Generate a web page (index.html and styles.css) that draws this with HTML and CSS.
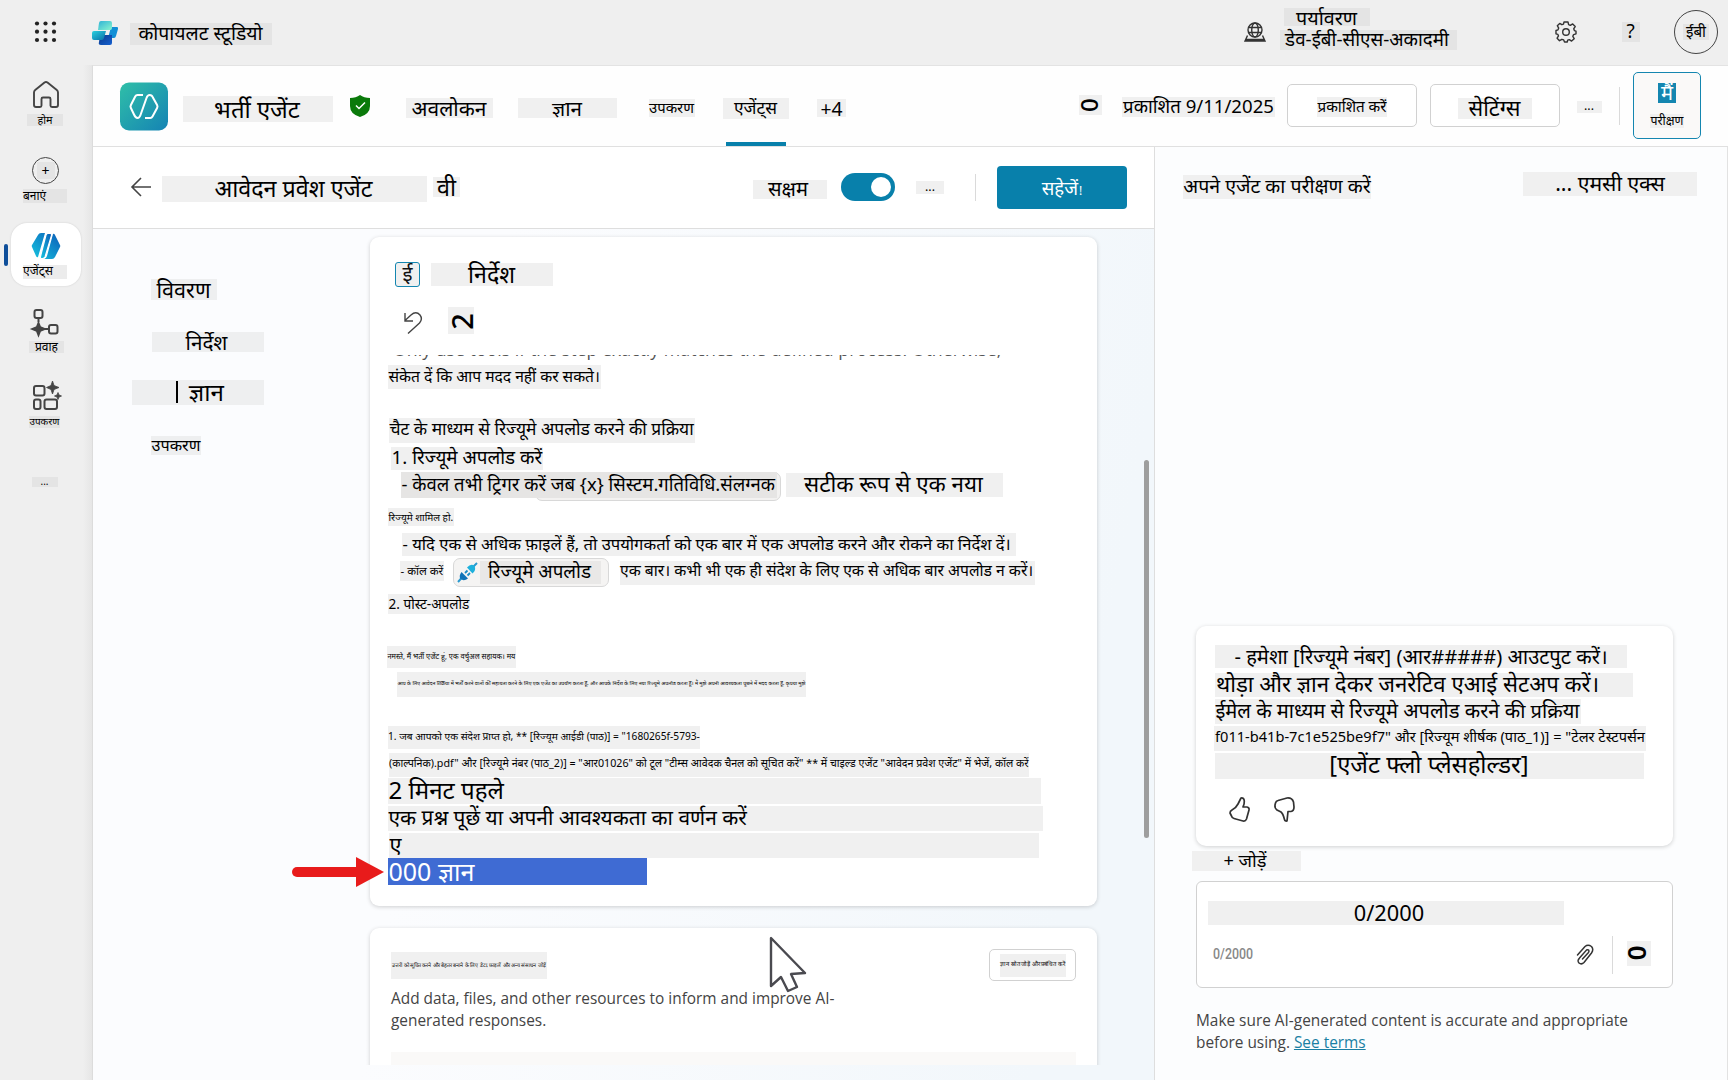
FILE: index.html
```html
<!DOCTYPE html>
<html lang="hi">
<head>
<meta charset="utf-8">
<title>कोपायलट स्टूडियो</title>
<link rel="stylesheet" href="styles.css">
</head>
<body>
<header class="topbar">
  <svg class="waffle" viewBox="0 0 22 22"><g fill="#222"><circle cx="2" cy="2.500" r="2.100"/><circle cx="10.500" cy="2.500" r="2.100"/><circle cx="19" cy="2.500" r="2.100"/><circle cx="2" cy="10.700" r="2.100"/><circle cx="10.500" cy="10.700" r="2.100"/><circle cx="19" cy="10.700" r="2.100"/><circle cx="2" cy="19" r="2.100"/><circle cx="10.500" cy="19" r="2.100"/><circle cx="19" cy="19" r="2.100"/></g></svg>
  <svg class="brand-mark" viewBox="0 0 26 24"><defs><linearGradient id="bm1" x1="0" y1="0" x2="1" y2="1"><stop offset="0" stop-color="#2fb3d6"/><stop offset="1" stop-color="#8af5cf"/></linearGradient><linearGradient id="bm2" x1="0" y1="0" x2="1" y2="1"><stop offset="0" stop-color="#2bd0dd"/><stop offset="1" stop-color="#0a6ea8"/></linearGradient><linearGradient id="bm3" x1="0" y1="0" x2="1" y2="1"><stop offset="0" stop-color="#0a3a8c"/><stop offset="1" stop-color="#1560d0"/></linearGradient></defs><path d="M19 6h6q1.500 0 1 2l-2 7q-.5 2-2 2h-6z" fill="#128fd6"/><path d="M8 14h12v8q0 2-2 2H9q-3 0-2-3z" fill="url(#bm3)"/><path d="M2 10h12l-2 7q-.5 2-2 2H2q-2 0-2-2v-5q0-2 2-2z" fill="url(#bm2)"/><path d="M9 0h9q2 0 2 2v5q0 2-2 2H6l1-7q.3-2 2-2z" fill="url(#bm1)"/></svg>
  <span class="tag brand-name">कोपायलट स्टूडियो</span>
  <svg class="globe" viewBox="0 0 22 20" fill="none" stroke="#333" stroke-width="1.400"><circle cx="11" cy="8" r="7"/><ellipse cx="11" cy="8" rx="3.300" ry="7"/><path d="M4.500 5.500h13M4.500 10.500h13M3.500 13.500 1 19h20l-2.500-5.500M1.500 17.500h19"/></svg>
  <div class="env">
    <span class="tag env-label">पर्यावरण</span>
    <span class="tag env-name">डेव-ईबी-सीएस-अकादमी</span>
  </div>
  <svg class="gear" viewBox="0 0 22 22" fill="none" stroke="#333" stroke-width="1.400" stroke-linejoin="round"><path d="M9 1h4l.6 2.700 1.700.7 2.400-1.500 2.500 2.600-1.500 2.300.7 1.800L21 10.200v2.600l-2.400.8-.8 1.700 1.400 2.400-2.600 2.400-2.300-1.500-1.600.6L12.200 21H9.500l-.8-2.100-1.800-.6-2.400 1.400-2.400-2.500 1.400-2.300-.6-1.500L1 12.800V9.500l2-.7.700-1.700-1.400-2.400 2.400-2.300 2.200 1.300 1.600-.6z"/><circle cx="11" cy="11" r="3.300"/></svg>
  <span class="tag help">?</span>
  <div class="avatar"><span class="tag">ईबी</span></div>
</header>
<div class="shell">
  <nav class="rail">
    <div class="rail-item home">
      <svg width="26" height="27" viewBox="0 0 26 27" fill="none" stroke="#444" stroke-width="1.900" stroke-linejoin="round"><path d="M1 11.500Q1 10 2.200 9L11.500 1.500q1.500-1 3 0L23.800 9Q25 10 25 11.500V24q0 2-2 2h-4q-1.500 0-1.500-1.500V18q0-1.500-1.500-1.500h-6Q8.500 16.500 8.500 18v6.500Q8.500 26 7 26H3q-2 0-2-2z"/></svg>
      <span class="tag">होम</span>
    </div>
    <div class="rail-item create">
      <div class="ring"><span class="tag">+</span></div>
      <span class="tag">बनाएं</span>
    </div>
    <div class="rail-item agents">
      <svg width="28" height="26" viewBox="0 0 28 26"><defs><linearGradient id="ag" x1="0" y1="1" x2="1" y2="0"><stop offset="0" stop-color="#16c6e0"/><stop offset="1" stop-color="#0b5cb8"/></linearGradient></defs><path d="M9 0h4L6 24q-1 1-2-1L0 14q-.5-1 0-2L6 2Q7 0 9 0zM15 26h5q2 0 3-2l5-10q.5-1 0-2L23 2q-1-2-2-1l-6 22q-1 3-3 3z" fill="url(#ag)"/><path d="M15.500.5h3q1.500.5 1 2L13 24q-.6 1.500-2.500 1.500H9Q8 25 8.500 23.500L14 2q.5-1.200 1.500-1.500z" fill="url(#ag)" stroke="#fff" stroke-width="1.200"/></svg>
      <span class="tag">एजेंट्स</span>
    </div>
    <div class="rail-item flows">
      <svg width="26" height="26" viewBox="0 0 26 26" fill="none" stroke="#444" stroke-width="2"><rect x="1.500" y="1" width="8" height="8" rx="2"/><path d="M5.500 9v4M12 20h4"/><rect x="16" y="16" width="8.500" height="8.500" rx="2"/><path d="M5.500 14 7.200 18.300 11.500 20 7.200 21.700 5.500 26 3.800 21.700-.5 20 3.800 18.300z" fill="#444"/></svg>
      <span class="tag">प्रवाह</span>
    </div>
    <div class="rail-item tools">
      <svg width="30" height="29" viewBox="0 0 30 29" fill="none" stroke="#444" stroke-width="2"><rect x="2" y="5" width="10.500" height="9.500" rx="2"/><rect x="2" y="18.500" width="6.500" height="9.500" rx="2"/><rect x="12.500" y="18.500" width="12.500" height="9.500" rx="2"/><path d="M20.500 0 22 4.500 27 6.500 22 8.500 20.500 13 19 8.500 14.500 6.500 19 4.500zM26 11.500 27 14 29.500 15 27 16 26 18.500 25 16 22.500 15 25 14z" fill="#444" stroke-width=".8"/></svg>
      <span class="tag">उपकरण</span>
    </div>
    <span class="tag rail-more">...</span>
  </nav>
  <main class="page">
    <div class="agent-bar">
      <svg class="agent-logo" viewBox="0 0 48 48"><defs><linearGradient id="al" x1="0" y1="0" x2="1" y2="1"><stop offset="0" stop-color="#2fbfa8"/><stop offset="1" stop-color="#1583b4"/></linearGradient></defs><rect width="48" height="48" rx="9" fill="url(#al)"/><path d="M23 12.500h-5.500q-1.500 0-2.300 1.500l-4.300 8.500q-.8 1.500 0 3L14 32q1.500 3.500 3.500 3.500t3-3l6-17q1-3 3.200-3t3.200 2.500l4.200 7.500q.8 1.500 0 3L32.500 34q-.8 1.500-2.300 1.500H25" fill="none" stroke="#fff" stroke-width="2"/></svg>
      <span class="tag agent-name">भर्ती एजेंट</span>
      <svg class="shield" viewBox="0 0 20 22"><path d="M10 0q4 3 10 3v8q0 8-10 11Q0 19 0 11V3q6 0 10-3z" fill="#0b7a0b"/><path d="m6 10.500 3 3 6-6" fill="none" stroke="#fff" stroke-width="1.500"/></svg>
      <span class="tag tab-overview">अवलोकन</span>
      <span class="tag tab-knowledge">ज्ञान</span>
      <span class="tag tab-tools">उपकरण</span>
      <div class="tab-active"><span class="tag">एजेंट्स</span></div>
      <span class="tag tab-more">+4</span>
      <span class="tag status-icon"><b class="turned">0</b></span>
      <span class="tag published">प्रकाशित 9/11/2025</span>
      <button class="btn publish"><span class="tag">प्रकाशित करें</span></button>
      <button class="btn settings"><span class="tag">सेटिंग्स</span></button>
      <span class="tag bar-more">...</span>
      <i class="rule"></i>
      <button class="test-btn"><span class="test-glyph">मैं</span><span class="tag">परीक्षण</span></button>
    </div>
    <div class="columns">
      <section class="editor">
        <div class="sub-bar">
          <svg class="back" viewBox="0 0 20 18" fill="none" stroke="#444" stroke-width="1.600"><path d="M20 9H1M10 0 1 9l9 9"/></svg>
          <span class="tag sub-title">आवेदन प्रवेश एजेंट</span>
          <span class="tag sub-v">वी</span>
          <span class="tag enabled">सक्षम</span>
          <span class="toggle"><i></i></span>
          <span class="tag sub-more">...</span>
          <i class="rule"></i>
          <button class="save"><span>सहेजें</span><small>!</small></button>
        </div>
        <div class="canvas">
          <nav class="sections">
            <span class="tag sec-details">विवरण</span>
            <span class="tag sec-instructions">निर्देश</span>
            <span class="tag sec-knowledge"><b class="caret"></b><span>ज्ञान</span></span>
            <span class="tag sec-tools">उपकरण</span>
          </nav>
          <div class="cards">
            <article class="card instructions">
              <div class="card-head"><span class="head-icon">ई</span><span class="tag head-title">निर्देश</span></div>
              <div class="tools-row">
                <svg class="undo" viewBox="0 0 18 22" fill="none" stroke="#444" stroke-width="1.400"><path d="M1 1v8h8M1 8.500 7 3q5-4.500 9 0 3 4-.5 8L4 21.500"/></svg>
                <span class="tag redo"><b class="turned">2</b></span>
              </div>
              <div class="cutoff"><span>Only use tools if the step exactly matches the defined process. Otherwise,</span></div>
              <span class="tag l1">संकेत दें कि आप मदद नहीं कर सकते।</span>
              <span class="tag l2">चैट के माध्यम से रिज्यूमे अपलोड करने की प्रक्रिया</span>
              <span class="tag l3">1. रिज्यूमे अपलोड करें</span>
              <div class="line l4"><i class="chip-back"></i><span class="tag l4a">- केवल तभी ट्रिगर करें जब {x} सिस्टम.गतिविधि.संलग्नक</span><span class="tag l4b">सटीक रूप से एक नया</span></div>
              <span class="tag l5">रिज्यूमे शामिल हो.</span>
              <span class="tag l6">- यदि एक से अधिक फ़ाइलें हैं, तो उपयोगकर्ता को एक बार में एक अपलोड करने और रोकने का निर्देश दें।</span>
              <div class="line l7"><span class="tag l7a">- कॉल करें</span><span class="chip"><svg width="19" height="19" viewBox="0 0 19 19"><path d="M0 19 4 14.500M15 4 19 0" stroke="#2a9ad0" stroke-width="2"/><path d="M3.500 9 10 15.500q-4 3-7.500.500-2-3 1-7z" fill="#1173b8"/><path d="M9 4.500q4-4.500 7.500-1.500 2 4-2 7.500z" fill="#1eb0dc"/><path d="m7 10 2.500-2.500M9.500 12.500 12 10" stroke="#1b8cc8" stroke-width="1.800"/></svg><span class="tag l7b">रिज्यूमे अपलोड</span></span><span class="tag l7c">एक बार। कभी भी एक ही संदेश के लिए एक से अधिक बार अपलोड न करें।</span></div>
              <span class="tag l8">2. पोस्ट-अपलोड</span>
              <span class="tag l9">नमस्ते, मैं भर्ती एजेंट हूं, एक वर्चुअल सहायक। मय</span>
              <span class="tag l10">आप के लिए आवेदन प्रक्रिया में भर्ती करने वालों की सहायता करने के लिए एक एजेंट का उपयोग करता हूं, और आपके निर्देश के लिए नया रिज्यूमे अपलोड करता हूं। मैं मुझे अपनी आवश्यकता पूछने में मदद करता हूं, कृपया मुझे</span>
              <span class="tag l11">1. जब आपको एक संदेश प्राप्त हो, ** [रिज्यूम आईडी (पाठ)] = "1680265f-5793-</span>
              <span class="tag l12">(काल्पनिक).pdf" और [रिज्यूमे नंबर (पाठ_2)] = "आर01026" को टूल "टीम्स आवेदक चैनल को सूचित करें" ** में चाइल्ड एजेंट "आवेदन प्रवेश एजेंट" में भेजें, कॉल करें</span>
              <span class="tag l13">2 मिनट पहले</span>
              <span class="tag l14">एक प्रश्न पूछें या अपनी आवश्यकता का वर्णन करें</span>
              <span class="tag l15">ए</span>
              <span class="tag l16">000 ज्ञान</span>
            </article>
            <article class="card knowledge">
              <div class="k-head"><span class="tag k-title">उत्तरों को सूचित करने और बेहतर बनाने के लिए डेटा, फ़ाइलें और अन्य संसाधन जोड़ें</span><button class="btn k-add"><span class="tag">ज्ञान स्रोत जोड़ें और प्रबंधित करें</span></button></div>
              <p>Add data, files, and other resources to inform and improve AI-<br>generated responses.</p>
              <div class="k-strip"></div>
            </article>
          </div>
          <i class="scrollbar"></i>
          <svg class="arrow" viewBox="0 0 92 30"><path d="M5 15h62" stroke="#e81b1b" stroke-width="10" stroke-linecap="round"/><path d="M64 0 92 15 64 30z" fill="#e81b1b"/></svg>
          <svg class="cursor" viewBox="0 0 38 56"><path d="M2 2v48l10-9 7 14 9-4-6-13 14-1z" fill="#fff" stroke="#4a4a50" stroke-width="2.400" stroke-linejoin="round"/></svg>
        </div>
      </section>
      <aside class="tester">
        <div class="tester-head"><span class="tag t-title">अपने एजेंट का परीक्षण करें</span><span class="tag t-tools">... एमसी एक्स</span></div>
        <div class="reply">
          <span class="tag r1">- हमेशा [रिज्यूमे नंबर] (आर#####) आउटपुट करें।</span>
          <span class="tag r2">थोड़ा और ज्ञान देकर जनरेटिव एआई सेटअप करें।</span>
          <span class="tag r3">ईमेल के माध्यम से रिज्यूमे अपलोड करने की प्रक्रिया</span>
          <span class="tag r4">f011-b41b-7c1e525be9f7" और [रिज्यूम शीर्षक (पाठ_1)] = "टेलर टेस्टपर्सन</span>
          <span class="tag r5">[एजेंट फ्लो प्लेसहोल्डर]</span>
          <div class="votes">
            <svg width="21" height="25" viewBox="0 0 21 25" fill="none" stroke="#333" stroke-width="1.700" stroke-linejoin="round"><path d="M12 1q3-.5 3.300 3 .2 3-1.300 6h4q2.500.5 2 3l-2.500 9q-1 2.500-3.500 2l-9-2.500Q3 21 2.500 19L1 16q0-2 2-3 4-2 6-6z"/></svg>
            <svg width="21" height="25" viewBox="0 0 21 25" fill="none" stroke="#333" stroke-width="1.700" stroke-linejoin="round"><path d="M13 24q-2 .5-2.500-1.500Q9 16.500 7 15l-4-2Q.5 11 1 8l.5-2Q2 4 4 3.500L13 1q5-.5 6.500 4l.5 5q0 4-3 4.500h-3z"/></svg>
          </div>
        </div>
        <span class="tag add">+ जोड़ें</span>
        <div class="composer">
          <span class="tag c-text">0/2000</span>
          <div class="c-row"><span class="count">0/2000</span>
            <svg class="clip" viewBox="0 0 18 21" fill="none" stroke="#333" stroke-width="1.500" stroke-linecap="round"><path d="M1.500 11 9 2.500q3-2.500 6.500 0 2.500 3 0 6.500L8 18.500q-2.500 2.500-5 .5-2-2.500.5-5l7-8q1.500-.8 2.300.300.500 1.200-.3 2.200L6.500 15"/></svg>
            <i class="rule"></i><span class="tag send"><b class="turned">0</b></span></div>
        </div>
        <p class="notice">Make sure AI-generated content is accurate and appropriate<br>before using. <a>See terms</a></p>
      </aside>
    </div>
  </main>
</div>
</body>
</html>
```
FILE: styles.css
```css
* { box-sizing: border-box; }
body { margin: 0; width: 1728px; height: 1080px; overflow: hidden; background: #efefef; font-family: "Noto Sans", "Noto Sans Devanagari", sans-serif; font-size: 14px; color: #111; line-height: 1.36; }
svg { display: block; flex: none; overflow: visible; }
button { padding: 0; font: inherit; }
.tag { display: flex; flex: none; align-items: center; justify-content: center; padding: 0 1px 1px 0; white-space: nowrap; background: #f0f0f0; color: #000; line-height: 1; }
.rule { flex: none; width: 1px; background: #dadada; }
.turned { display: block; font-weight: 500; transform: rotate(90deg); }
.btn { display: flex; flex: none; align-items: center; justify-content: center; border: 1px solid #d1d1d1; border-radius: 5px; background: #fff; }

.topbar { display: flex; height: 65px; background: #efefef; }
.topbar .tag { background: #e4e4e4; }
.waffle { width: 22px; height: 22px; margin: 21px 0 0 35px; }
.brand-mark { width: 26px; height: 24px; margin: 21px 0 0 35px; }
.brand-name { width: 142px; height: 22px; margin: 23px 0 0 12px; padding-bottom: 2px; font-size: 19.4px; }
.globe { width: 22px; height: 20px; margin: 22px 0 0 972px; }
.env { width: 178px; margin: 8px 0 0 14px; }
.env .env-label { width: 86px; height: 18px; margin-left: 4px; padding: 1px 1px 0 0; font-size: 19.7px; }
.env .env-name { width: 177px; height: 20px; margin-top: 4px; padding-right: 3px; font-size: 18.8px; }
.gear { width: 22px; height: 22px; margin: 21px 0 0 97px; }
.help { width: 18px; height: 20px; margin: 22px 0 0 45px; font-size: 19px; }
.avatar { display: flex; flex: none; align-items: center; justify-content: center; width: 44px; height: 44px; margin: 10px 0 0 34px; border: 1.5px solid #444; border-radius: 50%; }
.avatar .tag { width: 26px; height: 16px; padding: 0; font-size: 15.1px; }

.shell { display: flex; height: 1015px; }
.rail { flex: none; width: 92px; background: linear-gradient(90deg, #efefef 83px, #e6e6e6); }
.rail .tag { background: #e4e4e4; padding-bottom: 0; }
.rail-item { display: flex; flex-direction: column; align-items: flex-start; }
.home { padding: 16px 0 0 33px; }
.home .tag { width: 36px; height: 12px; margin: 6px 0 0 -6px; padding-right: 0; font-size: 10.8px; }
.create { padding: 31px 0 0 23px; }
.create > .tag { width: 44px; height: 14px; margin-top: 5px; justify-content: flex-start; font-size: 11.9px; }
.ring { display: flex; align-items: center; justify-content: center; width: 27px; height: 27px; margin-left: 9px; border: 1.5px solid #444; border-radius: 50%; }
.ring .tag { width: 18px; height: 17px; padding: 0; font-size: 14px; }
.agents { position: relative; width: 70px; height: 63px; margin: 20px 0 0 11px; padding: 10px 0 0 21px; border-radius: 16px; background: #fff; box-shadow: 0 0 2px #ccc; }
.agents::before { content: ""; position: absolute; left: -7px; top: 21px; width: 4px; height: 22px; border-radius: 2px; background: #0f4f9a; }
.agents .tag { width: 44px; height: 14px; margin: 6px 0 0 -9px; padding-bottom: 1px; justify-content: flex-start; background: #ececec; font-size: 12.1px; }
.flows { padding: 23px 0 0 33px; }
.flows .tag { width: 35px; height: 12px; margin: 6px 0 0 -4px; padding: 0; font-size: 12px; }
.tools { padding: 28px 0 0 32px; }
.tools .tag { width: 31px; height: 12px; margin: 6px 0 0 -3px; padding: 0; font-size: 9.9px; }
.rail-more { width: 26px; height: 10px; margin: 49px 0 0 32px; font-size: 9.9px; }

.page { flex: none; width: 1636px; background: #fdfdfe; border-top: 1px solid #e3e3e3; border-left: 1px solid #dcdcdc; }
.agent-bar { display: flex; height: 81px; border-bottom: 1px solid #e0e0e0; background: #fefefe; }
.agent-logo { width: 48px; height: 49px; margin: 16px 0 0 27px; }
.agent-name { width: 150px; height: 26px; margin: 30px 0 0 15px; padding-right: 2px; font-size: 23.9px; }
.shield { width: 20px; height: 22px; margin: 29px 0 0 17px; }
.tab-overview { width: 87px; height: 20px; margin: 32px 0 0 36px; padding-bottom: 0; font-size: 20.9px; }
.tab-knowledge { width: 99px; height: 20px; margin: 32px 0 0 25px; padding-bottom: 0; font-size: 20.6px; }
.tab-tools { width: 46px; height: 18px; margin: 33px 0 0 32px; font-size: 14.9px; }
.tab-active { width: 66px; height: 80px; margin-left: 28px; padding-top: 32px; background: linear-gradient(#0880ab, #0880ab) 3px 76px / 60px 4px no-repeat; }
.tab-active .tag { width: 66px; height: 21px; padding-bottom: 2px; font-size: 17.4px; }
.tab-more { width: 29px; height: 18px; margin: 33px 0 0 28px; padding: 1px 0 0; font-size: 19.2px; }
.status-icon { width: 23px; height: 20px; margin: 29px 0 0 233px; font-size: 24px; }
.published { width: 153px; height: 20px; margin: 31px 0 0 20px; padding-right: 0; font-size: 18.6px; }
.publish { width: 130px; height: 43px; margin: 18px 0 0 12px; }
.publish .tag { width: 70px; height: 20px; margin-top: 3px; padding: 0; font-size: 15.2px; }
.settings { width: 130px; height: 43px; margin: 18px 0 0 13px; }
.settings .tag { width: 74px; height: 21px; margin-top: 5px; padding-bottom: 0; font-size: 21.7px; }
.bar-more { width: 25px; height: 12px; margin: 35px 0 0 17px; font-size: 12.4px; }
.agent-bar .rule { height: 38px; margin: 21px 0 0 17px; }
.test-btn { display: flex; flex: none; flex-direction: column; align-items: center; width: 68px; height: 67px; margin: 6px 0 0 13px; border: 1px solid #1486b0; border-radius: 5px; background: #faf9f8; }
.test-glyph { display: flex; align-items: center; justify-content: center; width: 18px; height: 20px; margin: 10px 0 0 0; background: #1486b0; color: #fff; line-height: 1; font-size: 20.1px; }
.test-btn .tag { width: 34px; height: 14px; margin-top: 11px; padding: 0; font-size: 12.3px; }

.columns { display: flex; height: 933px; }
.editor { flex: none; width: 1062px; border-right: 1px solid #dedede; background: linear-gradient(100deg, #fbfcfe 35%, #f2f7fb 90%); }
.sub-bar { display: flex; height: 82px; border-bottom: 1px solid #dedede; background: #fff; }
.back { width: 20px; height: 18px; margin: 31px 0 0 38px; }
.sub-title { width: 265px; height: 26px; margin: 29px 0 0 11px; padding-right: 2px; font-size: 23.3px; }
.sub-v { width: 27px; height: 20px; margin: 30px 0 0 6px; padding: 2px 0 0; font-size: 23.3px; }
.enabled { width: 74px; height: 19px; margin: 33px 0 0 293px; padding: 0 4px 0 0; font-size: 20.1px; }
.toggle { flex: none; width: 54px; height: 28px; margin: 26px 0 0 14px; padding: 4px 0 0 30px; border-radius: 14px; background: #0880ab; }
.toggle i { display: block; width: 20px; height: 20px; border-radius: 50%; background: #fff; }
.sub-more { width: 28px; height: 13px; margin: 34px 0 0 21px; padding: 0; font-size: 12.4px; }
.sub-bar .rule { height: 27px; margin: 27px 0 0 31px; }
.save { display: flex; flex: none; align-items: center; justify-content: center; width: 130px; height: 43px; margin: 19px 0 0 21px; padding-top: 1px; border: 0; border-radius: 4px; background: #0880ab; color: #fff; line-height: 1; font-size: 18.6px; }
.save small { font-size: 12px; margin: 5px 0 0 1px; }

.canvas { position: relative; display: flex; height: 836px; overflow: hidden; }
.sections { flex: none; width: 277px; padding-top: 50px; }
.sections .tag { background: #eeeff0; }
.sec-details { width: 66px; height: 21px; margin-left: 58px; padding-bottom: 0; font-size: 21.6px; }
.sec-instructions { width: 112px; height: 20px; margin: 32px 0 0 59px; padding: 0 3px 0 0; font-size: 20.7px; }
.sec-knowledge { width: 132px; height: 25px; margin: 28px 0 0 39px; padding-left: 5px; gap: 11px; font-size: 24.1px; }
.caret { width: 1.5px; height: 22px; background: #000; }
.sec-tools { width: 50px; height: 19px; margin: 31px 0 0 58px; padding: 0; font-size: 16.2px; }

.cards { flex: none; width: 727px; padding-top: 8px; }
.card { border-radius: 9px; background: #fff; box-shadow: 0 1px 4px rgba(0, 0, 0, .18); }
.instructions { height: 669px; padding: 25px 0 0 18px; }
.instructions > .tag, .line .tag { justify-content: flex-start; padding-right: 0; padding-left: .5px; }
.card-head { display: flex; padding-left: 7px; }
.head-icon { display: flex; align-items: center; justify-content: center; width: 25px; height: 25px; padding-bottom: 3px; border: solid #1486b0; border-width: 1.5px 1px; border-radius: 3px; background: #f0f0f0; line-height: 1; font-size: 20.4px; }
.head-title { width: 122px; height: 23px; margin: 1px 0 0 11px; padding-bottom: 0; font-size: 23.2px; }
.tools-row { display: flex; height: 27px; margin-top: 20px; padding-left: 16px; }
.undo { width: 18px; height: 22px; margin-top: 5px; }
.redo { width: 26px; height: 27px; margin-left: 26px; padding: 2px 0 0 1px; font-size: 29px; }
.redo .turned { transform: rotate(-90deg); }
.cutoff { height: 7px; margin: 21px 0 3px 5px; overflow: hidden; white-space: nowrap; }
.cutoff span { display: block; margin-top: -17px; line-height: 22px; color: #555; font-family: "Open Sans", sans-serif; font-size: 17.75px; }
.line { display: flex; position: relative; height: 29px; }
.l1 { width: 213px; height: 24px; font-size: 15.6px; }
.l2 { width: 306px; height: 25px; margin: 29px 0 0 1px; font-size: 17.4px; }
.instructions > .l2, .instructions > .l3 { padding-bottom: 3px; }
.l3 { width: 152px; height: 23px; margin: 4px 0 0 3px; font-size: 18.8px; }
.l4 { margin: 2px 0 0 13px; }
.chip-back { position: absolute; left: 134px; top: 0; width: 246px; height: 29px; border: 1px solid #d8d8d8; border-radius: 7px; background: #f3f2f1; }
.l4a { position: relative; width: 376px; height: 26px; background: #e6e5e4; font-size: 18.5px; }
.l4b { width: 217px; height: 24px; margin: 1px 0 0 9px; font-size: 22.4px; }
.line .l4b { padding-left: 18px; }
.l5 { width: 66px; height: 18px; margin-top: 7px; font-size: 10px; }
.l6 { width: 614px; height: 23px; margin: 7px 0 0 14px; font-size: 16.6px; }
.l7 { margin: 2px 0 0 12px; }
.l7a { width: 44px; height: 20px; margin-top: 3px; font-size: 11.5px; }
.chip { display: flex; flex: none; width: 156px; height: 29px; margin-left: 9px; padding: 4px 0 0 4px; border: 1px solid #d8d8d8; border-radius: 7px; background: #f5f4f3; }
.l7b { width: 121px; height: 23px; margin: -2px 0 0 3px; background: #e9e8e7; font-size: 18.8px; }
.chip .l7b { padding: 0 0 3px 8px; }
.l7c { width: 415px; height: 24px; margin: 3px 0 0 11px; font-size: 15.7px; }
.line .l7c { padding: 0 0 4px; }
.l8 { width: 82px; height: 20px; margin-top: 7px; font-size: 13.6px; }
.instructions > .l8 { padding-bottom: 0; }
.l9 { width: 129px; height: 22px; margin: 32px 0 0 -1px; font-size: 7.3px; }
.l10 { width: 409px; height: 25px; margin: 4px 0 0 9px; font-size: 5.2px; }
.l11 { width: 312px; height: 23px; margin-top: 29px; font-size: 10.2px; }
.l12 { width: 640px; height: 24px; margin: 4px 0 0 1px; font-size: 10.7px; }
.instructions > .l11, .instructions > .l12 { padding: 0 0 3px; }
.l13 { width: 653px; height: 26px; margin-top: 1px; font-size: 24.1px; }
.l14 { width: 655px; height: 25px; margin-top: 2px; font-size: 20.9px; }
.instructions > .l14 { padding-bottom: 3px; }
.l15 { width: 650px; height: 25px; margin: 2px 0 0 1px; font-size: 21.7px; }
.l16 { width: 259px; height: 27px; background: #3f6bd3; color: #fff; font-size: 25px; }
.instructions > .l16 { color: #fff; padding-bottom: 0; }

.knowledge { height: 160px; margin-top: 22px; padding: 21px 0 0 21px; font-family: "Open Sans", sans-serif; color: #444; }
.k-head { display: flex; }
.k-title { width: 156px; height: 27px; margin-top: 3px; padding: 0; font-size: 5.3px; }
.k-add { width: 87px; height: 32px; margin-left: 442px; }
.k-add .tag { width: 66px; height: 23px; padding: 0; font-size: 5.9px; }
.knowledge p { margin: 7px 0 0; font-size: 15.4px; line-height: 22px; white-space: nowrap; }
.k-strip { width: 685px; height: 30px; margin-top: 20px; background: #faf9f8; }
.scrollbar { position: absolute; left: 1051px; top: 231px; width: 5px; height: 378px; border-radius: 3px; background: #9e9e9e; }
.arrow { position: absolute; left: 199px; top: 628px; width: 92px; height: 30px; }
.cursor { position: absolute; left: 676px; top: 707px; width: 38px; height: 56px; }

.tester { flex: none; width: 573px; height: 933px; border-right: 1px solid #e2e2e2; background: #fcfdfe; }
.tester-head { display: flex; height: 479px; padding: 25px 0 0 28px; }
.t-title { width: 188px; height: 24px; margin-top: 3px; padding: 0 0 2px; font-size: 19.5px; }
.t-tools { width: 174px; height: 24px; margin-left: 152px; padding: 0 0 2px; font-size: 21.2px; }
.reply { width: 477px; height: 220px; margin-left: 41px; padding: 19px 0 0 19px; border-radius: 10px; background: #fff; box-shadow: 0 1px 4px rgba(0, 0, 0, .18); }
.r1 { width: 412px; height: 23px; padding: 0; font-size: 20.15px; }
.r2 { width: 418px; height: 24px; margin-top: 5px; padding-right: 33px; font-size: 22.2px; }
.r3 { width: 366px; height: 25px; margin-top: 2px; font-size: 20.1px; }
.r4 { width: 432px; height: 25px; margin: 2px 0 0 -1px; padding: 0 0 4px; font-size: 14.6px; }
.r5 { width: 429px; height: 26px; margin-top: 2px; padding-bottom: 2px; font-size: 23.8px; }
.votes { display: flex; gap: 24px; padding: 18px 0 0 14px; }
.add { width: 109px; height: 20px; margin: 5px 0 0 37px; padding: 0 3px 2px 0; font-size: 18.2px; }
.composer { width: 477px; height: 107px; margin: 10px 0 0 41px; padding: 19px 0 0 11px; border: 1px solid #d1d1d1; border-radius: 6px; background: #fff; }
.c-text { width: 356px; height: 24px; padding: 0 0 0 6px; font-size: 21.8px; }
.c-row { display: flex; padding-left: 5px; }
.count { width: 40px; margin: 22px 0 0; font-family: Roboto, sans-serif; font-size: 12.4px; font-weight: 500; color: #888; line-height: 16px; transform: scaleY(1.15); }
.clip { width: 18px; height: 21px; margin: 19px 0 0 323px; }
.c-row .rule { height: 38px; margin: 11px 0 0 18px; }
.send { width: 24px; height: 25px; margin: 16px 0 0 14px; padding-right: 1px; font-size: 26px; }
.send .turned { font-weight: 600; }
.notice { margin: 22px 0 0 41px; font: 15.4px/22px "Open Sans", sans-serif; color: #444; white-space: nowrap; }
.notice a { color: #1a7fa3; text-decoration: underline; }
```
